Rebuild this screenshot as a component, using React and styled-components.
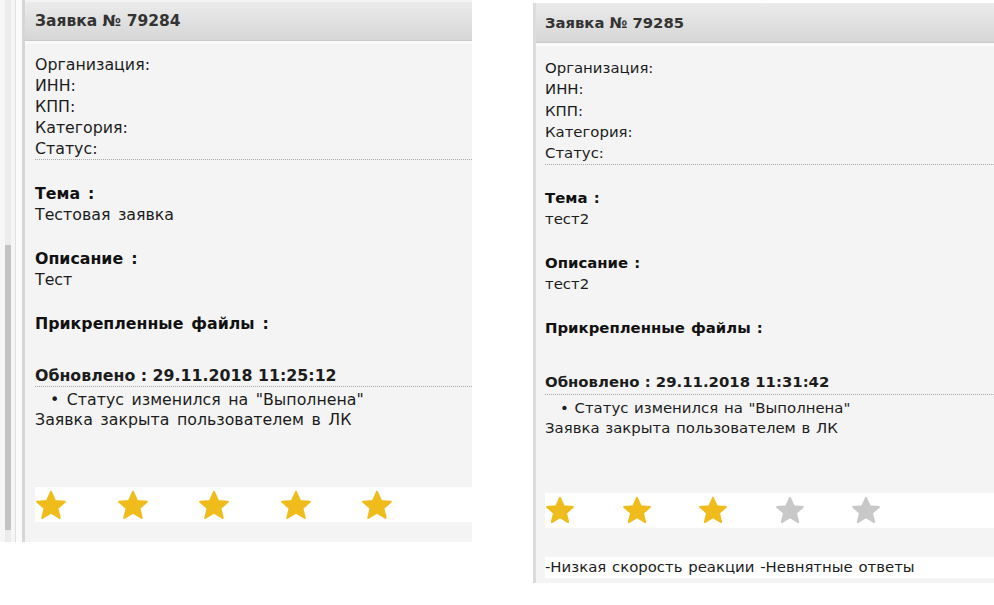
import React from 'react'
import styled, { createGlobalStyle } from 'styled-components'

const GlobalStyle = createGlobalStyle`
  html, body {
    margin: 0;
    background: #ffffff;
  }
  body {
    font-family: "DejaVu Sans", Tahoma, sans-serif;
    color: #1c1c1c;
  }
`

const tickets = [
  {
    id: 79284,
    topic: 'Тестовая заявка',
    description: 'Тест',
    updated: '29.11.2018 11:25:12',
    rating: 5,
    comment: null,
    m: { fs: 15.8, ws: 2.5, hfs: 15.5, lh: 21, header: 38, top: 2, pad: 10, infoTop: 13, gap: 23, filesGap: 31, starsGap: 57, starStep: 81.5, star: 32 },
  },
  {
    id: 79285,
    topic: 'тест2',
    description: 'тест2',
    updated: '29.11.2018 11:31:42',
    rating: 3,
    comment: '-Низкая скорость реакции -Невнятные ответы',
    m: { fs: 14.9, ws: 1, hfs: 14.8, lh: 21.3, header: 39, top: 0, pad: 9, infoTop: 15, gap: 22.5, filesGap: 33, starsGap: 55, starStep: 76.5, star: 30 },
  },
]

function Star({ on, size }) {
  return (
    <StarIcon width={size} height={size - 2} viewBox="0 0 24 23" $on={on}>
      <polygon points="12,1.5 15.1,8.4 22.6,9 16.9,14 18.7,21.4 12,17.4 5.3,21.4 7.1,14 1.4,9 8.9,8.4" />
    </StarIcon>
  )
}

function Ticket({ t }) {
  const m = t.m
  return (
    <Card $top={m.top} $fs={m.fs} $lh={m.lh} $ws={m.ws}>
      <Header $h={m.header} $pad={m.pad} $fs={m.hfs}>Заявка № {t.id}</Header>
      <Body $pad={m.pad}>
        <Info $top={m.infoTop}>
          <div>Организация:</div>
          <div>ИНН:</div>
          <div>КПП:</div>
          <div>Категория:</div>
          <div>Статус:</div>
        </Info>
        <Field $gap={m.gap}>
          <Label>Тема :</Label>
          <div>{t.topic}</div>
        </Field>
        <Field $gap={m.gap}>
          <Label>Описание :</Label>
          <div>{t.description}</div>
        </Field>
        <Field $gap={m.gap}>
          <Label>Прикрепленные файлы :</Label>
        </Field>
        <Updated $gap={m.filesGap}>Обновлено : {t.updated}</Updated>
        <Events>
          <Event>• Статус изменился на "Выполнена"</Event>
          <div>Заявка закрыта пользователем в ЛК</div>
        </Events>
        <StarBar $gap={m.starsGap} $step={m.starStep - m.star}>
          {[1, 2, 3, 4, 5].map((n) => (
            <Star key={n} on={n <= t.rating} size={m.star} />
          ))}
        </StarBar>
        {t.comment && <Comment>{t.comment}</Comment>}
      </Body>
    </Card>
  )
}

export default function App() {
  return (
    <>
      <GlobalStyle />
      <Page>
        <LeftShot>
          <Gutter>
            <Track>
              <Thumb />
            </Track>
            <GutterEdge />
          </Gutter>
          <Ticket t={tickets[0]} />
        </LeftShot>
        <RightShot>
          <Ticket t={tickets[1]} />
        </RightShot>
      </Page>
    </>
  )
}

const Page = styled.div`
  display: flex;
  align-items: flex-start;
  width: 994px;
  height: 605px;
  overflow: hidden;
`

const LeftShot = styled.div`
  display: flex;
  width: 472px;
  height: 542px;
  background: #f4f4f4;
`

const Gutter = styled.div`
  display: flex;
  width: 25px;
  background: #f6f6f6;
`

const Track = styled.div`
  display: flex;
  flex-direction: column;
  width: 7px;
  margin-left: 5px;
  background: #ececec;
`

const Thumb = styled.div`
  margin-top: 245px;
  height: 285px;
  background: #c3c3c3;
`

const GutterEdge = styled.div`
  width: 6px;
  margin-left: 4px;
  border-left: 1px solid #e0e0e0;
  border-right: 3px solid #d6d6d6;
  background: #fbfbfb;
`

const RightShot = styled.div`
  display: flex;
  width: 458px;
  height: 580px;
  margin-top: 3px;
  margin-left: 61px;
  border-left: 3px solid #dcdcdc;
  background: #f4f4f4;
`

const Card = styled.div`
  flex: 1;
  display: flex;
  flex-direction: column;
  padding-top: ${(p) => p.$top}px;
  background: #f4f4f4;
  font-size: ${(p) => p.$fs}px;
  line-height: ${(p) => p.$lh}px;
  word-spacing: ${(p) => p.$ws}px;
  white-space: nowrap;
`

const Header = styled.div`
  display: flex;
  align-items: center;
  height: ${(p) => p.$h}px;
  padding-left: ${(p) => p.$pad}px;
  background: linear-gradient(#ebebeb, #d6d6d6);
  border-bottom: 1px solid #cacaca;
  box-shadow: 0 3px 0 #fafafa;
  color: #333333;
  font-weight: bold;
  font-size: ${(p) => p.$fs}px;
  word-spacing: 0;
`

const Body = styled.div`
  display: flex;
  flex-direction: column;
  padding-left: ${(p) => p.$pad}px;
`

const Info = styled.div`
  padding-top: ${(p) => p.$top}px;
  border-bottom: 1px dotted #a9a9a9;
`

const Field = styled.div`
  margin-top: ${(p) => p.$gap}px;
`

const Label = styled.div`
  font-weight: bold;
  color: #111111;
`

const Updated = styled.div`
  margin-top: ${(p) => p.$gap}px;
  font-weight: bold;
  word-spacing: 0;
  border-bottom: 1px dotted #a9a9a9;
`

const Events = styled.div`
  padding-top: 3px;
  line-height: 20px;
`

const Event = styled.div`
  padding-left: 15px;
`

const StarBar = styled.div`
  display: flex;
  align-items: center;
  gap: ${(p) => p.$step}px;
  height: 35px;
  margin-top: ${(p) => p.$gap}px;
  background: #ffffff;
`

const StarIcon = styled.svg`
  flex-shrink: 0;
  fill: ${(p) => (p.$on ? '#efbc1b' : '#c8c8c8')};
  stroke: ${(p) => (p.$on ? '#efbc1b' : '#c8c8c8')};
  stroke-width: 1.6;
  stroke-linejoin: round;
`

const Comment = styled.div`
  margin-top: 29px;
  height: 21px;
  line-height: 21px;
  background: #ffffff;
`
